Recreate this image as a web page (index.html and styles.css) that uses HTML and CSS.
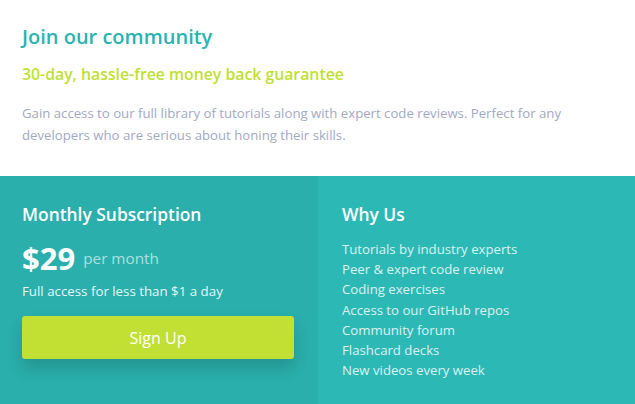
FILE: index.html
```html
<!DOCTYPE html>
<html lang="en">
<head>
<meta charset="utf-8">
<title>Single price grid</title>
<link rel="stylesheet" href="styles.css">
</head>
<body>
<main class="card">
  <section class="top">
    <h1 class="title">Join our community</h1>
    <h2 class="subtitle">30-day, hassle-free money back guarantee</h2>
    <p class="desc">Gain access to our full library of tutorials along with expert code reviews. Perfect for any developers who are serious about honing their skills.</p>
  </section>
  <div class="bottom">
    <section class="sub">
      <h3 class="heading">Monthly Subscription</h3>
      <div class="price"><span class="amount">$29</span><span class="per">per month</span></div>
      <p class="note">Full access for less than $1 a day</p>
      <button class="btn">Sign Up</button>
    </section>
    <section class="why">
      <h3 class="heading">Why Us</h3>
      <ul class="list">
        <li>Tutorials by industry experts</li>
        <li>Peer &amp; expert code review</li>
        <li>Coding exercises</li>
        <li>Access to our GitHub repos</li>
        <li>Community forum</li>
        <li>Flashcard decks</li>
        <li>New videos every week</li>
      </ul>
    </section>
  </div>
</main>
</body>
</html>
```
FILE: styles.css
```css
* { box-sizing: border-box; }
html, body { margin: 0; padding: 0; }
body {
  font-family: "Open Sans", Lato, sans-serif;
  background: #fff;
  width: 635px;
  height: 404px;
  overflow: hidden;
}
.card { display: flex; flex-direction: column; height: 404px; }
.top { padding: 25px 22px 0; height: 176px; }
.title {
  margin: 0;
  font-size: 20px;
  font-weight: 600;
  color: #2bb3b1;
  line-height: 24px;
}
.subtitle {
  margin: 15px 0 0;
  font-size: 15.8px;
  font-weight: 600;
  color: #c0df34;
  line-height: 20px;
}
.desc {
  margin: 18px 0 0;
  font-size: 13.2px;
  line-height: 22px;
  color: #a2a9c3;
  max-width: 570px;
}
.bottom { display: flex; flex: 1; }
.sub {
  width: 318px;
  background: #2aafac;
  padding: 26px 24px 0 22px;
  color: #fff;
}
.why {
  flex: 1;
  background: #2cb9b6;
  padding: 26px 22px 0 24px;
  color: #fff;
}
.heading {
  margin: 0;
  font-size: 17.4px;
  font-weight: 600;
  line-height: 24px;
}
.price { display: flex; align-items: center; margin-top: 15px; height: 34px; }
.amount { font-size: 31px; font-weight: 700; }
.per { font-size: 15.3px; margin-left: 8px; color: rgba(255,255,255,0.62); }
.note { margin: 7px 0 0; font-size: 13.3px; line-height: 18px; color: #e6f6f5; }
.btn {
  display: block;
  width: 272px;
  height: 43px;
  margin-top: 16px;
  border: 0;
  border-radius: 3px;
  background: #c1e033;
  color: #fff;
  font-family: inherit;
  font-size: 16px;
  box-shadow: 0 9px 16px rgba(0, 0, 0, 0.16);
}
.list {
  list-style: none;
  margin: 13px 0 0;
  padding: 0;
  font-size: 13.2px;
  line-height: 20.2px;
  color: #dbf1f0;
}
```
